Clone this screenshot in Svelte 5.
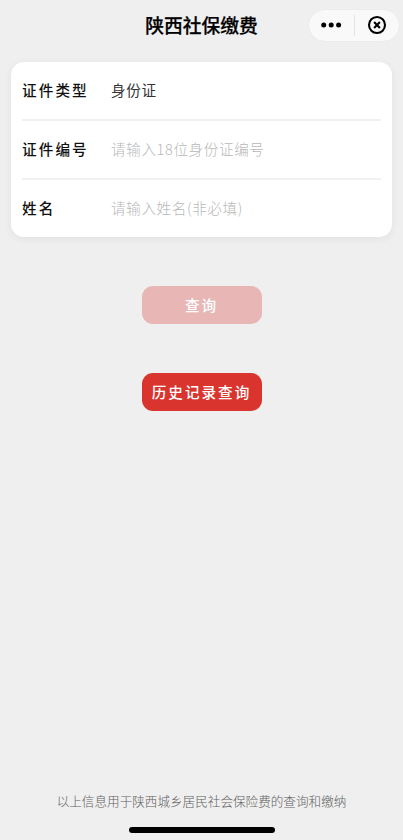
<script lang="ts">
	// Social insurance payment lookup: document type, number and an optional
	// name. The query button stays dimmed until a number has been entered.

	const fields = [
		{ name: 'type', label: '证件类型', placeholder: '', value: '身份证' },
		{ name: 'number', label: '证件编号', placeholder: '请输入18位身份证编号', value: '' },
		{ name: 'fullname', label: '姓名', placeholder: '请输入姓名(非必填)', value: '' }
	];

	let values = $state(fields.map((f) => f.value));
	const ready = $derived(values[1].length === 18);
</script>

<div class="page">
	<header>
		<h1>陕西社保缴费</h1>
		<div class="capsule">
			<button type="button" aria-label="更多">
				<svg width="22" height="8" viewBox="0 0 22 8">
					<circle cx="3.7" cy="4" r="2.5" />
					<circle cx="11.2" cy="4" r="2.5" />
					<circle cx="18.6" cy="4" r="2.5" />
				</svg>
			</button>
			<span class="divider"></span>
			<button type="button" aria-label="关闭">
				<svg width="20" height="20" viewBox="0 0 20 20">
					<circle class="line" cx="10" cy="10" r="8" />
					<path class="line" d="M7.1 7.1l5.8 5.8M12.9 7.1l-5.8 5.8" />
				</svg>
			</button>
		</div>
	</header>

	<form class="card">
		{#each fields as field, i}
			<label class="row">
				<span>{field.label}</span>
				<input
					name={field.name}
					type="text"
					autocomplete="off"
					readonly={field.name === 'type'}
					placeholder={field.placeholder}
					bind:value={values[i]}
				/>
			</label>
		{/each}
	</form>

	<div class="actions">
		<button type="button" class:dim={!ready}>查询</button>
		<button type="button">历史记录查询</button>
	</div>

	<footer>
		<p>以上信息用于陕西城乡居民社会保险费的查询和缴纳</p>
		<div class="home"></div>
	</footer>
</div>

<style>
	:global(body) { margin: 0; background: #efefef; }
	.page {
		display: flex;
		flex-direction: column;
		height: 840px;
		overflow: hidden;
		background: #efefef;
		font-family: "Noto Sans CJK SC", sans-serif;
	}
	button, input { font-family: inherit; border: 0; padding: 0; }
	button { cursor: pointer; }

	header {
		display: grid;
		grid-template-columns: 1fr auto 1fr;
		align-items: center;
		height: 50px;
		flex: none;
	}
	h1 {
		grid-column: 2;
		margin: 0;
		font-size: 18.8px;
		font-weight: 500;
		line-height: 28px;
		color: #000;
		-webkit-text-stroke: 0.25px #000;
	}
	.capsule {
		display: flex;
		align-items: center;
		justify-self: end;
		box-sizing: border-box;
		width: 92px;
		height: 33px;
		margin-right: 3px;
		border: 1px solid #ebebeb;
		border-radius: 17px;
		background: #f9f9f9;
	}
	.capsule button {
		display: flex;
		flex: 1;
		align-items: center;
		justify-content: center;
		background: none;
	}
	.divider { width: 1px; height: 21px; background: #e4e4e4; }
	.line { fill: none; stroke: #000; stroke-width: 2.1; }

	.card {
		flex: none;
		margin: 12px 11px 0 11px;
		padding: 0 11px;
		border-radius: 13px;
		background: #fff;
		box-shadow: 0 2px 9px rgba(0, 0, 0, 0.06);
	}
	.row {
		display: flex;
		align-items: center;
		box-sizing: border-box;
		height: 59px;
		padding-bottom: 2px;
		border-bottom: 2px solid #f1f1f1;
	}
	.row:last-child { height: 57px; border: 0; }
	.row span {
		width: 89px;
		font-size: 14.6px;
		font-weight: 500;
		letter-spacing: 2.1px;
		color: #111;
	}
	input {
		flex: 1;
		min-width: 0;
		height: 30px;
		outline: 0;
		background: none;
		font-size: 14.6px;
		letter-spacing: 0.6px;
		color: #333;
	}
	input::placeholder { color: #b8b8b8; font-weight: 300; }

	.actions {
		display: flex;
		flex-direction: column;
		align-items: center;
		gap: 49px;
		margin-top: 49px;
	}
	.actions button {
		width: 120px;
		height: 38px;
		padding-bottom: 2px;
		border-radius: 11px;
		background: #d9342e;
		color: #fff;
		font-size: 14.6px;
		font-weight: 500;
		letter-spacing: 2px;
	}
	.actions .dim { background: #e8b6b5; }

	footer {
		display: flex;
		flex-direction: column;
		align-items: center;
		gap: 16px;
		margin-top: auto;
		padding-bottom: 7px;
	}
	footer p {
		margin: 0;
		font-size: 12.6px;
		font-weight: 300;
		line-height: 20px;
		color: #606060;
	}
	.home { width: 146px; height: 6px; border-radius: 3px; background: #000; }
</style>
